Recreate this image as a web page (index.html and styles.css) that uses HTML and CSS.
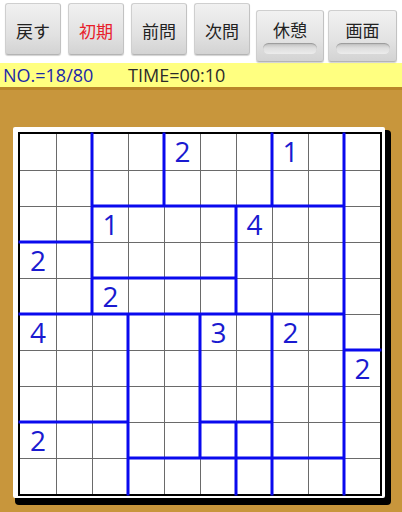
FILE: index.html
```html
<!DOCTYPE html>
<html lang="ja">
<head>
<meta charset="utf-8">
<link rel="stylesheet" href="styles.css">
</head>
<body>
<div class="toolbar">
  <div class="btn">戻す</div>
  <div class="btn btn-red">初期</div>
  <div class="btn">前問</div>
  <div class="btn">次問</div>
  <div class="btn toggle"><span class="toggle-label">休憩</span><span class="indicator"></span></div>
  <div class="btn toggle"><span class="toggle-label">画面</span><span class="indicator"></span></div>
</div>
<div class="status">
  <span class="status-no">NO.=18/80</span>
  <span class="status-time">TIME=00:10</span>
</div>
<div class="board-area">
  <div class="board">
    <div class="grid">
      <div class="cell"></div><div class="cell"></div><div class="cell"></div><div class="cell"></div><div class="cell">2</div><div class="cell"></div><div class="cell"></div><div class="cell">1</div><div class="cell"></div><div class="cell"></div>
      <div class="cell"></div><div class="cell"></div><div class="cell"></div><div class="cell"></div><div class="cell"></div><div class="cell"></div><div class="cell"></div><div class="cell"></div><div class="cell"></div><div class="cell"></div>
      <div class="cell"></div><div class="cell"></div><div class="cell">1</div><div class="cell"></div><div class="cell"></div><div class="cell"></div><div class="cell">4</div><div class="cell"></div><div class="cell"></div><div class="cell"></div>
      <div class="cell">2</div><div class="cell"></div><div class="cell"></div><div class="cell"></div><div class="cell"></div><div class="cell"></div><div class="cell"></div><div class="cell"></div><div class="cell"></div><div class="cell"></div>
      <div class="cell"></div><div class="cell"></div><div class="cell">2</div><div class="cell"></div><div class="cell"></div><div class="cell"></div><div class="cell"></div><div class="cell"></div><div class="cell"></div><div class="cell"></div>
      <div class="cell">4</div><div class="cell"></div><div class="cell"></div><div class="cell"></div><div class="cell"></div><div class="cell">3</div><div class="cell"></div><div class="cell">2</div><div class="cell"></div><div class="cell"></div>
      <div class="cell"></div><div class="cell"></div><div class="cell"></div><div class="cell"></div><div class="cell"></div><div class="cell"></div><div class="cell"></div><div class="cell"></div><div class="cell"></div><div class="cell">2</div>
      <div class="cell"></div><div class="cell"></div><div class="cell"></div><div class="cell"></div><div class="cell"></div><div class="cell"></div><div class="cell"></div><div class="cell"></div><div class="cell"></div><div class="cell"></div>
      <div class="cell">2</div><div class="cell"></div><div class="cell"></div><div class="cell"></div><div class="cell"></div><div class="cell"></div><div class="cell"></div><div class="cell"></div><div class="cell"></div><div class="cell"></div>
      <div class="cell"></div><div class="cell"></div><div class="cell"></div><div class="cell"></div><div class="cell"></div><div class="cell"></div><div class="cell"></div><div class="cell"></div><div class="cell"></div><div class="cell"></div>
      <svg class="regions" viewBox="0 0 360 360" width="360" height="360" aria-hidden="true">
        <path d="M72 0V180 M144 0V72 M252 0V72 M324 0V360 M216 72V180 M108 180V360 M180 180V324 M216 288V360 M252 180V360
                 M72 72H324 M0 108H72 M72 144H216 M0 180H324 M324 216H360 M0 288H108 M180 288H252 M108 324H324"
              fill="none" stroke="#0a0aee" stroke-width="3" stroke-linecap="square"/>
      </svg>
    </div>
  </div>
</div>
</body>
</html>
```

FILE: styles.css
```css
* { box-sizing: border-box; }

html, body {
  margin: 0;
  padding: 0;
}

body {
  width: 402px;
  height: 512px;
  overflow: hidden;
  background: #c8963c;
  font-family: "Open Sans", "Noto Sans", "Noto Sans CJK JP", sans-serif;
}

.toolbar {
  display: flex;
  align-items: flex-start;
  height: 63px;
  padding-left: 5px;
  background: #ffffff;
}

.btn {
  width: 56px;
  height: 52px;
  margin-top: 3px;
  margin-right: 7px;
  display: flex;
  align-items: center;
  justify-content: center;
  padding-top: 3px;
  border: 1px solid #cfcfcf;
  border-bottom-color: #b4b4b4;
  border-right-color: #c2c2c2;
  border-radius: 3px;
  background: linear-gradient(#f1f1f1, #e2e2e2 60%, #d3d3d3);
  box-shadow: 0 1px 1px rgba(0, 0, 0, 0.18);
  font-family: "Noto Sans CJK JP", sans-serif;
  font-size: 17px;
  color: #222222;
}

.btn-red {
  color: #e8202a;
}

.toggle {
  width: 68px;
  margin-top: 10px;
  margin-right: 4px;
  flex-direction: column;
  justify-content: flex-start;
  padding-top: 8px;
}

.btn:nth-child(4) {
  margin-right: 6px;
}

.toggle + .toggle {
  width: 69px;
}

.toggle-label {
  line-height: 22px;
}

.indicator {
  display: block;
  width: 54px;
  height: 11px;
  margin-top: 2px;
  border-radius: 6px;
  background: linear-gradient(#bdbdbd, #dedede 45%, #ececec);
  box-shadow: inset 0 1px 1px rgba(0, 0, 0, 0.2);
}

.status {
  display: flex;
  height: 24px;
  padding-left: 3px;
  background: #ffff80;
  font-size: 18px;
  line-height: 24px;
  border-bottom: 3px solid #b98629;
  box-sizing: content-box;
}

.status-no {
  width: 125px;
  color: #1b28a8;
}

.status-time {
  color: #2b2b2b;
}

.board-area {
  padding: 37px 0 0 13px;
}

.board {
  width: 372px;
  padding: 5px 3px 2px 5px;
  background: #ffffff;
  border-radius: 2px;
  box-shadow: 4px 5px 0 2px #000000;
}

.grid {
  position: relative;
  display: grid;
  grid-template-columns: repeat(10, 36px);
  grid-template-rows: repeat(10, 36px);
  width: 364px;
  height: 364px;
  border: 2px solid #000000;
  background: #ffffff;
}

.cell {
  border-left: 1px solid #6a6a6a;
  border-top: 1px solid #6a6a6a;
  font-size: 28px;
  line-height: 34px;
  text-align: center;
  color: #1a1ad0;
}

.cell:nth-child(10n+1) {
  border-left: none;
}

.cell:nth-child(-n+10) {
  border-top: none;
}

.regions {
  position: absolute;
  left: 0;
  top: 0;
  overflow: visible;
  pointer-events: none;
}
```
